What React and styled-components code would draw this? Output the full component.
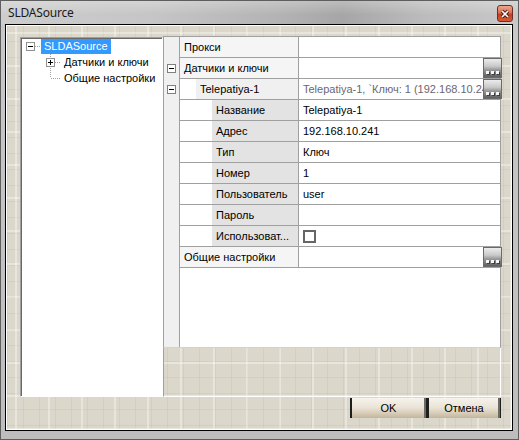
import React from 'react'
import styled, { createGlobalStyle } from 'styled-components'

const GlobalStyle = createGlobalStyle`
  html, body { margin: 0; padding: 0; background: #fff; }
  * { box-sizing: border-box; }
`

const Window = styled.div`
  width: 519px;
  height: 440px;
  display: flex;
  flex-direction: column;
  border: 1px solid #5e5e5e;
  background: linear-gradient(180deg, #c9c9c9, #bdbdbd);
  font-family: "Liberation Sans", Arial, sans-serif;
  font-size: 11px;
  color: #000;
`

const TitleBar = styled.div`
  height: 23px;
  flex: none;
  display: flex;
  align-items: center;
  justify-content: space-between;
  padding: 0 5px 0 7px;
  background:
    linear-gradient(180deg, rgba(255,255,255,0.25), rgba(255,255,255,0) 60%),
    linear-gradient(90deg, #cdcdcd 0%, #c5c5c5 30%, #b2b2b2 55%, #a6a6a6 66%, #bcbcbc 82%, #c8c8c8 100%);
`

const Title = styled.span`
  font-family: "Noto Sans", "DejaVu Sans", sans-serif;
  font-size: 12px;
  letter-spacing: -0.2px;
  color: #1a1a1a;
`

const CloseButton = styled.div`
  width: 16px;
  height: 17px;
  margin-top: 2px;
  border: 1px solid #6a3024;
  border-radius: 3px;
  background: linear-gradient(180deg, #eea58f 0%, #dc6e52 45%, #c4401f 55%, #d65a36 100%);
  display: flex;
  align-items: center;
  justify-content: center;
`

const Frame = styled.div`
  flex: none;
  height: 407px;
  margin: 0 5px 8px 4px;
  border: 1px solid #000;
`

const Client = styled.div`
  height: 100%;
  border: 1px solid #fff;
  display: flex;
  flex-direction: column;
  padding: 10px 10px 11px 13px;
  background-color: #dcd7cb;
  background-image:
    linear-gradient(90deg, rgba(255,255,255,0.35) 2px, transparent 2px),
    linear-gradient(0deg, rgba(255,255,255,0.35) 2px, transparent 2px),
    linear-gradient(90deg, rgba(196,150,140,0.16) 1px, transparent 1px),
    linear-gradient(0deg, rgba(196,150,140,0.16) 1px, transparent 1px);
  background-size: 33px 33px, 33px 33px, 16px 16px, 16px 16px;
  background-position: 8px 8px, 8px 8px, 0 0, 0 0;
`

const Main = styled.div`
  height: 361px;
  flex: none;
  display: flex;
`

const Tree = styled.div`
  width: 143px;
  height: 360px;
  margin-top: 1px;
  flex: none;
  background: #fff;
  border-top: 1px solid #a0a0a0;
  border-left: 1px solid #a0a0a0;
  border-right: 1px solid #fff;
  border-bottom: 1px solid #fff;
  box-shadow: inset 1px 1px 0 #696969;
`

const TreeRow = styled.div`
  height: 16px;
  display: flex;
  align-items: center;
  padding-left: ${p => p.$level * 20}px;
`

const TreeLabel = styled.span`
  height: 15px;
  line-height: 13px;
  padding: 0 2px;
  white-space: nowrap;
  border: 1px ${p => (p.$selected ? 'dotted #c08030' : 'solid transparent')};
  background: ${p => (p.$selected ? '#3399ff' : 'transparent')};
  color: ${p => (p.$selected ? '#fff' : '#000')};
`

const PropPanel = styled.div`
  width: 338px;
  flex: none;
  display: flex;
  flex-direction: column;
`

const Grid = styled.div`
  height: 312px;
  flex: none;
  display: flex;
  flex-direction: column;
  border: 1px solid #a0a0a0;
  border-bottom-color: #d2d2d2;
  background: linear-gradient(90deg, #f0f0f0 0 15px, #a0a0a0 15px 16px, #fff 16px);
`

const Row = styled.div`
  height: 21px;
  flex: none;
  display: flex;
`

const Gutter = styled.div`
  width: 16px;
  flex: none;
  display: flex;
  align-items: center;
  justify-content: center;
  padding: 0 1px 1px 0;
`

const RowBody = styled.div`
  flex: 1;
  min-width: 0;
  display: flex;
  border-bottom: 1px solid #a0a0a0;
`

const NameCell = styled.div`
  width: 119px;
  flex: none;
  display: flex;
  border-right: 1px solid #a0a0a0;
  padding-left: ${p => p.$level * 16}px;
`

const NameText = styled.div`
  flex: 1;
  min-width: 0;
  padding-left: 4px;
  line-height: 20px;
  white-space: nowrap;
  overflow: hidden;
  background: ${p => p.$bg};
`

const ValueCell = styled.div`
  flex: 1;
  min-width: 0;
  display: flex;
  align-items: center;
  padding-left: 4px;
`

const ValueText = styled.div`
  flex: 1;
  min-width: 0;
  line-height: 20px;
  white-space: nowrap;
  overflow: hidden;
  color: ${p => (p.$muted ? '#6a6670' : '#000')};
`

const EllipsisButton = styled.div`
  width: 19px;
  height: 20px;
  flex: none;
  margin-right: -2px;
  border: 1px solid #6a6a6a;
  background: linear-gradient(180deg, #ececec 0%, #c9c9c9 40%, #9a9a9a 60%, #5f5f5f 100%);
  display: flex;
  align-items: flex-end;
  justify-content: center;
  gap: 2px;
  padding-bottom: 3px;
`

const Dot = styled.span`
  width: 3px;
  height: 3px;
  background: #f6f6f6;
  box-shadow: 1px 1px 0 #3e3e3e;
`

const CheckBox = styled.span`
  width: 13px;
  height: 13px;
  border: 2px solid #666;
  background: #fff;
`

const HelpArea = styled.div`
  flex: 1;
  border-left: 1px solid #a0a0a0;
  border-right: 1px solid #fff;
  border-bottom: 1px solid #fff;
`

const ButtonRow = styled.div`
  height: 20px;
  margin-top: 1px;
  flex: none;
  display: flex;
  justify-content: flex-end;
`

const DialogButton = styled.div`
  width: ${p => p.$w}px;
  height: 20px;
  display: flex;
  align-items: center;
  justify-content: center;
  font-size: 11px;
  background: linear-gradient(180deg, #f6f3ec 0%, #ebe5d9 45%, #d8cdb9 75%, #c3b59c 100%);
  box-shadow: inset 2px 0 0 #1e1e1e, inset -1px 0 0 #1e1e1e, inset -3px 0 0 #6e6a62;
`

function Connector({ kind, sign }) {
  return (
    <svg width="20" height="16" style={{ flex: 'none' }}>
      {kind === 'branch' && (
        <line x1="9.5" y1="0" x2="9.5" y2="16" stroke="#a0a0a0" strokeDasharray="1 1" />
      )}
      {kind === 'last' && (
        <>
          <line x1="9.5" y1="0" x2="9.5" y2="8" stroke="#a0a0a0" strokeDasharray="1 1" />
          <line x1="10" y1="8.5" x2="20" y2="8.5" stroke="#a0a0a0" strokeDasharray="1 1" />
        </>
      )}
      {sign && (
        <>
          <line x1="14" y1="8.5" x2="20" y2="8.5" stroke="#a0a0a0" strokeDasharray="1 1" />
          <rect x="5.5" y="4.5" width="8" height="8" fill="#fff" stroke="#919191" />
          <line x1="7" y1="8.5" x2="12" y2="8.5" stroke="#000" />
          {sign === '+' && <line x1="9.5" y1="6" x2="9.5" y2="11" stroke="#000" />}
        </>
      )}
    </svg>
  )
}

function Collapse() {
  return (
    <svg width="9" height="9">
      <rect x="0.5" y="0.5" width="8" height="8" fill="#fff" stroke="#808080" />
      <line x1="2" y1="4.5" x2="7" y2="4.5" stroke="#000" />
    </svg>
  )
}

function Ellipsis() {
  return (
    <EllipsisButton>
      <Dot />
      <Dot />
      <Dot />
    </EllipsisButton>
  )
}

const rows = [
  { name: 'Прокси', level: 0, bg: '#f5f5f5', value: '' },
  { name: 'Датчики и ключи', level: 0, bg: '#f5f5f5', value: '', collapse: true, more: true },
  { name: 'Telepatiya-1', level: 1, bg: '#f0f0f0', value: 'Telepatiya-1, `Ключ: 1 (192.168.10.24', muted: true, collapse: true, more: true },
  { name: 'Название', level: 2, bg: '#e3e3e3', value: 'Telepatiya-1' },
  { name: 'Адрес', level: 2, bg: '#e3e3e3', value: '192.168.10.241' },
  { name: 'Тип', level: 2, bg: '#e3e3e3', value: 'Ключ' },
  { name: 'Номер', level: 2, bg: '#e3e3e3', value: '1' },
  { name: 'Пользователь', level: 2, bg: '#e3e3e3', value: 'user' },
  { name: 'Пароль', level: 2, bg: '#e3e3e3', value: '' },
  { name: 'Использоват...', level: 2, bg: '#e3e3e3', check: true },
  { name: 'Общие настройки', level: 0, bg: '#f5f5f5', value: '', more: true },
]

export default function App() {
  return (
    <>
      <GlobalStyle />
      <Window>
        <TitleBar>
          <Title>SLDASource</Title>
          <CloseButton>
            <svg width="10" height="10">
              <path d="M2 2 L8 8 M8 2 L2 8" stroke="#4a1c12" strokeWidth="3.4" />
              <path d="M2 2 L8 8 M8 2 L2 8" stroke="#fff" strokeWidth="1.7" />
            </svg>
          </CloseButton>
        </TitleBar>
        <Frame>
          <Client>
            <Main>
              <Tree>
                <TreeRow $level={0}>
                  <Connector sign="-" />
                  <TreeLabel $selected>SLDASource</TreeLabel>
                </TreeRow>
                <TreeRow $level={1}>
                  <Connector kind="branch" sign="+" />
                  <TreeLabel>Датчики и ключи</TreeLabel>
                </TreeRow>
                <TreeRow $level={1}>
                  <Connector kind="last" />
                  <TreeLabel>Общие настройки</TreeLabel>
                </TreeRow>
              </Tree>
              <PropPanel>
                <Grid>
                  {rows.map(r => (
                    <Row key={r.name}>
                      <Gutter>{r.collapse && <Collapse />}</Gutter>
                      <RowBody>
                        <NameCell $level={r.level}>
                          <NameText $bg={r.bg}>{r.name}</NameText>
                        </NameCell>
                        <ValueCell>
                          {r.check ? (
                            <CheckBox />
                          ) : (
                            <ValueText $muted={r.muted}>{r.value}</ValueText>
                          )}
                          {r.more && <Ellipsis />}
                        </ValueCell>
                      </RowBody>
                    </Row>
                  ))}
                </Grid>
                <HelpArea />
              </PropPanel>
            </Main>
            <ButtonRow>
              <DialogButton $w={77}>OK</DialogButton>
              <DialogButton $w={74}>Отмена</DialogButton>
            </ButtonRow>
          </Client>
        </Frame>
      </Window>
    </>
  )
}
